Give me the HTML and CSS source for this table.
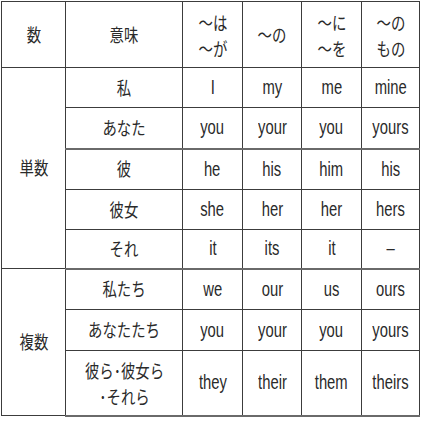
FILE: index.html
```html
<!DOCTYPE html>
<html lang="ja">
<head>
<meta charset="utf-8">
<link rel="stylesheet" href="styles.css">
</head>
<body>
<table class="grid">
  <colgroup>
    <col class="c-num"><col class="c-mean"><col class="c-a"><col class="c-b"><col class="c-c"><col class="c-d">
  </colgroup>
  <tr class="r-head">
    <td><span class="t">数</span></td>
    <td><span class="t">意味</span></td>
    <td><span class="t two">〜は<br>〜が</span></td>
    <td><span class="t">〜の</span></td>
    <td><span class="t two">〜に<br>〜を</span></td>
    <td><span class="t two">〜の<br>もの</span></td>
  </tr>
  <tr class="r40">
    <td rowspan="5"><span class="t">単数</span></td>
    <td><span class="t">私</span></td>
    <td><span class="e">I</span></td>
    <td><span class="e">my</span></td>
    <td><span class="e">me</span></td>
    <td><span class="e">mine</span></td>
  </tr>
  <tr class="r41 thick">
    <td><span class="t">あなた</span></td>
    <td><span class="e">you</span></td>
    <td><span class="e">your</span></td>
    <td><span class="e">you</span></td>
    <td><span class="e">yours</span></td>
  </tr>
  <tr class="r41">
    <td><span class="t">彼</span></td>
    <td><span class="e">he</span></td>
    <td><span class="e">his</span></td>
    <td><span class="e">him</span></td>
    <td><span class="e">his</span></td>
  </tr>
  <tr class="r40">
    <td><span class="t">彼女</span></td>
    <td><span class="e">she</span></td>
    <td><span class="e">her</span></td>
    <td><span class="e">her</span></td>
    <td><span class="e">hers</span></td>
  </tr>
  <tr class="r39 thick">
    <td><span class="t">それ</span></td>
    <td><span class="e">it</span></td>
    <td><span class="e">its</span></td>
    <td><span class="e">it</span></td>
    <td><span class="e">–</span></td>
  </tr>
  <tr class="r41">
    <td rowspan="3"><span class="t">複数</span></td>
    <td><span class="t">私たち</span></td>
    <td><span class="e">we</span></td>
    <td><span class="e">our</span></td>
    <td><span class="e">us</span></td>
    <td><span class="e">ours</span></td>
  </tr>
  <tr class="r41">
    <td><span class="t">あなたたち</span></td>
    <td><span class="e">you</span></td>
    <td><span class="e">your</span></td>
    <td><span class="e">you</span></td>
    <td><span class="e">yours</span></td>
  </tr>
  <tr class="r65 thick">
    <td><span class="t two">彼ら･彼女ら<br>･それら</span></td>
    <td><span class="e">they</span></td>
    <td><span class="e">their</span></td>
    <td><span class="e">them</span></td>
    <td><span class="e">theirs</span></td>
  </tr>
</table>
</body>
</html>
```
FILE: styles.css
```css
html, body {
  margin: 0;
  padding: 0;
  background: #ffffff;
}
body {
  padding: 1px 0 0 1px;
}
.grid {
  border-collapse: collapse;
  table-layout: fixed;
  width: 418px;
  font-family: "Liberation Sans", "Noto Sans CJK JP", sans-serif;
  font-size: 18px;
  color: #2a2a2a;
}
.c-num { width: 64px; }
.c-mean { width: 117px; }
.c-a { width: 60px; }
.c-b { width: 59px; }
.c-c { width: 60px; }
.c-d { width: 58px; }
.grid td {
  border: 1px solid #3c3c3c;
  padding: 0;
  text-align: center;
  vertical-align: middle;
  line-height: 22px;
  overflow: hidden;
  white-space: nowrap;
}
.t {
  display: inline-block;
  font-family: "Noto Sans CJK JP", sans-serif;
  font-size: 18px;
  transform: scaleX(0.8);
}
.t.two {
  line-height: 26px;
}
.e {
  display: inline-block;
  font-family: "Liberation Sans", sans-serif;
  font-size: 20px;
  transform: scaleX(0.74);
}
.r-head { height: 66px; }
.r39 { height: 39px; }
.r40 { height: 40px; }
.r41 { height: 41px; }
.r65 { height: 65px; }
.thick td {
  border-bottom: 2px solid #6a6a6a;
}
```
